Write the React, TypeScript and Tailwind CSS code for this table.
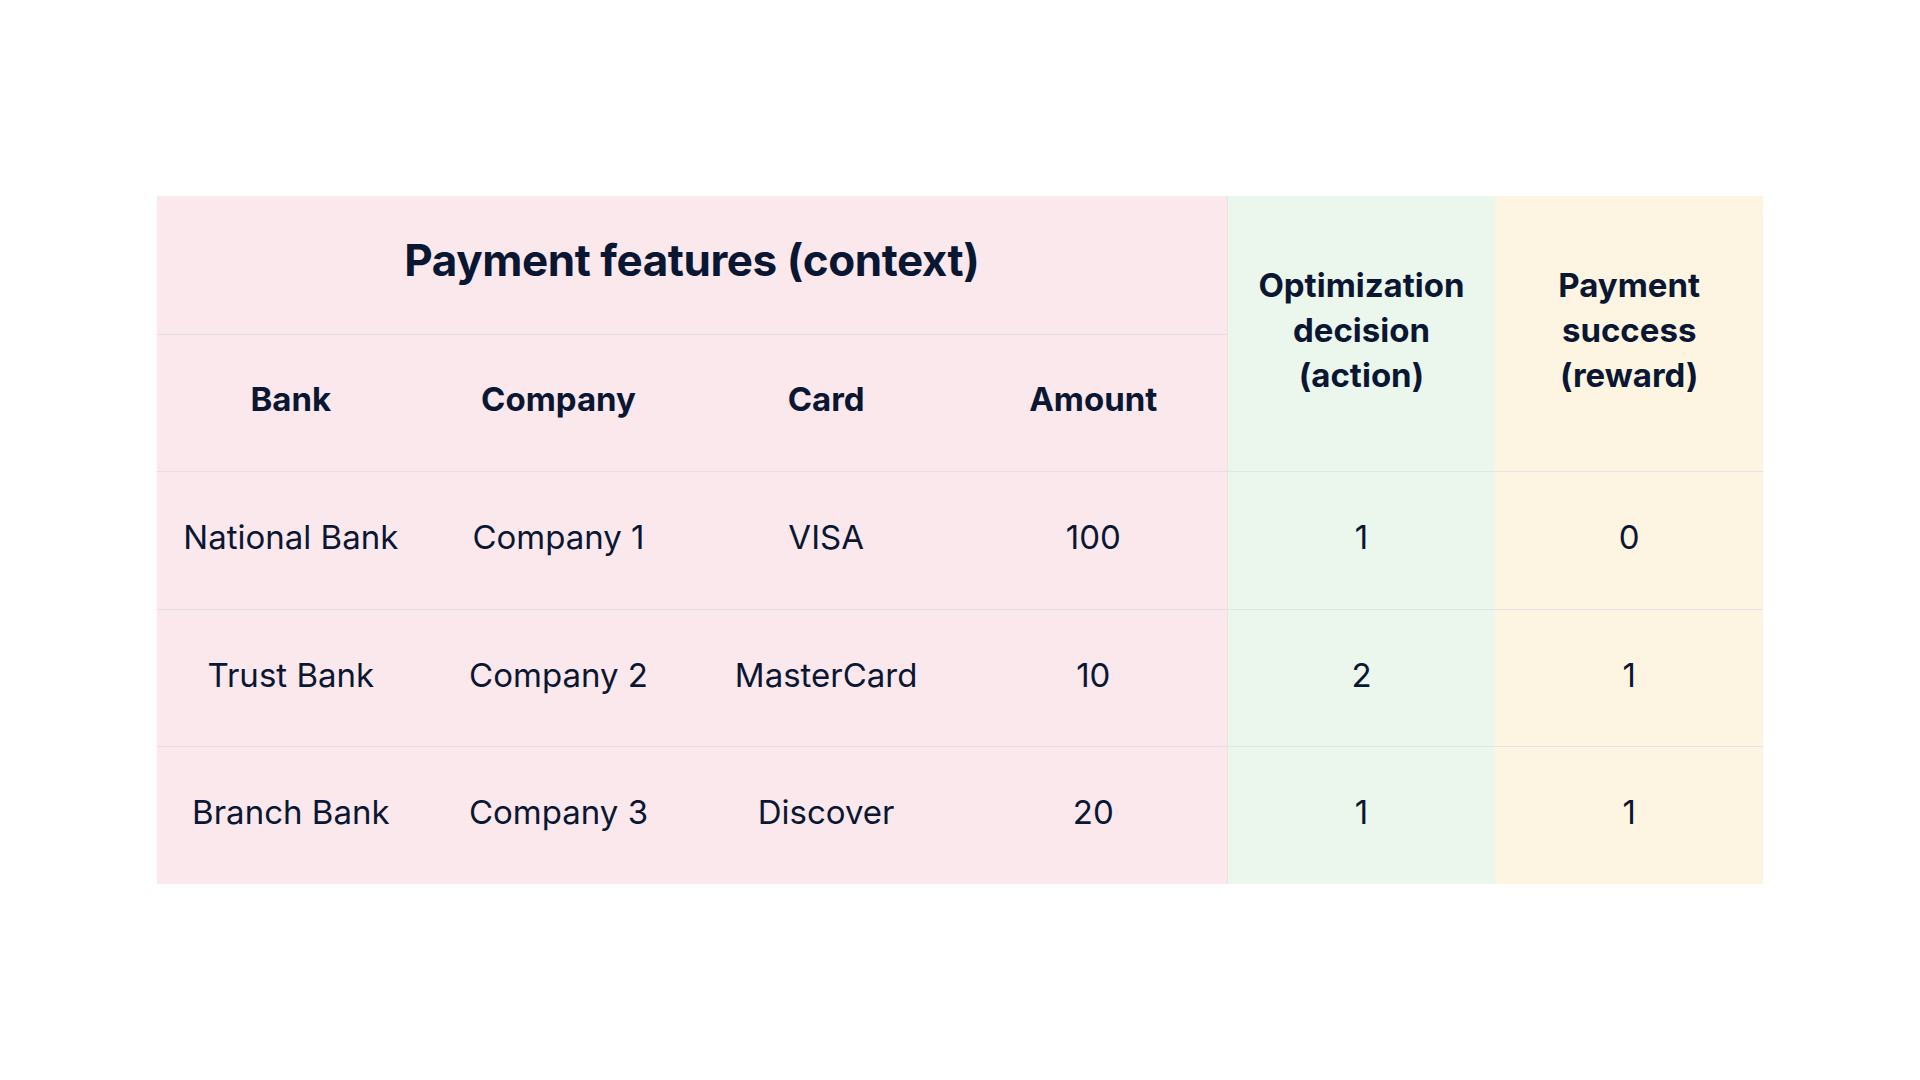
const columns = ["Bank", "Company", "Card", "Amount"];

const rows = [
  { bank: "National Bank", company: "Company 1", card: "VISA", amount: "100", action: "1", reward: "0" },
  { bank: "Trust Bank", company: "Company 2", card: "MasterCard", amount: "10", action: "2", reward: "1" },
  { bank: "Branch Bank", company: "Company 3", card: "Discover", amount: "20", action: "1", reward: "1" },
];

const pink = "bg-[#fbe8ec]";
const green = "bg-[#ebf6ec]";
const yellow = "bg-[#fdf5e1]";

export default function App() {
  return (
    <div
      className="min-h-screen w-full bg-white flex items-center justify-center text-[#0a1733]"
      style={{ fontFamily: "Inter, 'Noto Sans', sans-serif" }}
    >
      <div className="grid grid-cols-6 grid-rows-5 w-[1606px] h-[688px]">
        {/* context header */}
        <div className={`${pink} col-span-4 flex items-center justify-center pb-[10px] border-r border-[#f1dfe4]`}>
          <span className="text-[44px] font-bold tracking-[-0.01em]">Payment features (context)</span>
        </div>
        <div className={`${green} row-span-2 flex items-center justify-center pb-[6px]`}>
          <span className="text-[33px] leading-[45px] font-bold text-center">
            Optimization
            <br />
            decision
            <br />
            (action)
          </span>
        </div>
        <div className={`${yellow} row-span-2 flex items-center justify-center pb-[6px]`}>
          <span className="text-[33px] leading-[45px] font-bold text-center">
            Payment
            <br />
            success
            <br />
            (reward)
          </span>
        </div>

        {/* column headers */}
        {columns.map((c, i) => (
          <div
            key={c}
            className={`${pink} border-t border-[#e4dfe6] flex items-center justify-center pb-[6px] text-[33px] font-bold ${
              i === 3 ? "border-r border-r-[#f1dfe4]" : ""
            }`}
          >
            {c}
          </div>
        ))}

        {/* data rows */}
        {rows.map((r) => (
          <div key={r.bank} className="contents">
            {[r.bank, r.company, r.card, r.amount].map((v, i) => (
              <div
                key={i}
                className={`${pink} border-t border-[#e4dfe6] flex items-center justify-center pb-[5px] text-[33px] ${
                  i === 3 ? "border-r border-r-[#f1dfe4]" : ""
                }`}
              >
                {v}
              </div>
            ))}
            <div className={`${green} border-t border-[#e2e4e6] flex items-center justify-center pb-[5px] text-[33px]`}>
              {r.action}
            </div>
            <div className={`${yellow} border-t border-[#e4e2e4] flex items-center justify-center pb-[5px] text-[33px]`}>
              {r.reward}
            </div>
          </div>
        ))}
      </div>
    </div>
  );
}
